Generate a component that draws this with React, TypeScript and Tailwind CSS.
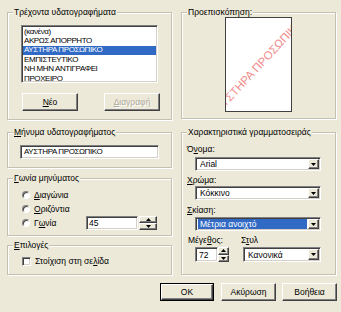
const sunken =
  "border border-t-[#808080] border-l-[#808080] border-r-white border-b-white shadow-[inset_1px_1px_0_#404040,inset_-1px_-1px_0_#d4d0c8]";
const raised =
  "border border-t-white border-l-white border-r-[#404040] border-b-[#404040] shadow-[inset_-1px_-1px_0_#808080]";

function Group({ title, className, children }: { title: React.ReactNode; className: string; children?: React.ReactNode }) {
  return (
    <div className={`relative border border-[#c4c1b1] shadow-[inset_1px_1px_0_#fff,1px_1px_0_#fff] ${className}`}>
      <span className="absolute left-[5px] top-[-6px] bg-[#ece9d8] px-[1px] leading-[10px]">{title}</span>
      {children}
    </div>
  );
}

function U({ children }: { children: React.ReactNode }) {
  return <span className="underline underline-offset-[1px]">{children}</span>;
}

function Button({ children, className = "", disabled = false, isDefault = false }: { children: React.ReactNode; className?: string; disabled?: boolean; isDefault?: boolean }) {
  const inner = (
    <div
      className={`flex h-full w-full items-center justify-center ${raised} ${
        disabled ? "text-[#aca899] [text-shadow:1px_1px_0_#fff]" : "text-black"
      }`}
    >
      {children}
    </div>
  );
  if (isDefault) {
    return <div className={`border border-black ${className}`}>{inner}</div>;
  }
  return <div className={className}>{inner}</div>;
}

function Arrow({ up = false }: { up?: boolean }) {
  return (
    <svg width="5" height="3" viewBox="0 0 5 3">
      <path d={up ? "M2.5 0 L5 3 L0 3 Z" : "M0 0 L5 0 L2.5 3 Z"} fill="#000" />
    </svg>
  );
}

function Spinner({ className }: { className: string }) {
  return (
    <div className={`flex flex-col ${className}`}>
      <div className={`flex flex-1 items-center justify-center bg-[#ece9d8] ${raised}`}>
        <Arrow up />
      </div>
      <div className={`flex flex-1 items-center justify-center bg-[#ece9d8] ${raised}`}>
        <Arrow />
      </div>
    </div>
  );
}

function Select({ value, className, selected = false }: { value: string; className: string; selected?: boolean }) {
  return (
    <div className={`flex items-center bg-white p-[1px] ${sunken} ${className}`}>
      <div className="flex h-full flex-1 items-center pl-[1px]">
        <span
          className={`flex h-full flex-1 items-center pl-[2px] ${
            selected ? "bg-[#316ac5] text-white" : ""
          }`}
        >
          {value}
        </span>
      </div>
      <div className={`ml-[1px] flex h-full w-[11px] items-center justify-center bg-[#ece9d8] ${raised}`}>
        <svg width="5" height="3" viewBox="0 0 5 3">
          <path d="M0 0 L5 0 L2.5 3 Z" fill="#000" />
        </svg>
      </div>
    </div>
  );
}

function Radio({ label }: { label: React.ReactNode }) {
  return (
    <div className="flex h-[14px] items-center gap-[4px]">
      <div className="h-[8px] w-[8px] rounded-full border border-t-[#808080] border-l-[#808080] border-r-white border-b-white bg-white shadow-[inset_1px_1px_0_#404040]" />
      <span>{label}</span>
    </div>
  );
}

const items = ["(κανένα)", "ΑΚΡΩΣ ΑΠΟΡΡΗΤΟ", "ΑΥΣΤΗΡΑ ΠΡΟΣΩΠΙΚΟ", "ΕΜΠΙΣΤΕΥΤΙΚΟ", "ΝΗ ΜΗΝ ΑΝΤΙΓΡΑΦΕΙ", "ΠΡΟΧΕΙΡΟ"];

export default function App() {
  return (
    <div className="h-[312px] w-[341px] bg-[#ece9d8] font-['Liberation_Sans',Arial,sans-serif] text-[8.5px] leading-[10px] text-black">
      <div className="flex gap-[9px] pl-[7px]">
        {/* left column */}
        <div className="flex w-[165px] flex-col pt-[12px]">
          <Group title="Τρέχοντα υδατογραφήματα" className="h-[108px] pl-[13px] pt-[12px]">
            <div className={`h-[58px] w-[137px] bg-white ${sunken} p-[1px]`}>
              {items.map((it, i) => (
                <div
                  key={it}
                  className={`flex h-[9.4px] items-center pl-[1px] text-[8px] tracking-[-0.4px] ${
                    i === 2 ? "bg-[#316ac5] text-white" : ""
                  }`}
                >
                  {it}
                </div>
              ))}
            </div>
            <div className="ml-[1px] mt-[10px] flex gap-[26px]">
              <Button className="h-[18px] w-[56px]">
                <U>Ν</U>έο
              </Button>
              <Button className="h-[18px] w-[56px]" disabled>
                <U>Δ</U>ιαγραφή
              </Button>
            </div>
          </Group>

          <Group
            title={
              <>
                <U>Μ</U>ήνυμα υδατογραφήματος
              </>
            }
            className="mt-[12px] h-[36px] pl-[12px] pt-[12px]"
          >
            <div className={`flex h-[14px] w-[139px] items-center bg-white pl-[3px] text-[8px] tracking-[-0.4px] ${sunken}`}>
              ΑΥΣΤΗΡΑ ΠΡΟΣΩΠΙΚΟ
            </div>
          </Group>

          <Group
            title={
              <>
                <U>Γ</U>ωνία μηνύματος
              </>
            }
            className="mt-[10px] h-[58px] pl-[14px] pt-[9px]"
          >
            <Radio
              label={
                <>
                  <U>Δ</U>ιαγώνια
                </>
              }
            />
            <Radio
              label={
                <>
                  <U>Ο</U>ριζόντια
                </>
              }
            />
            <div className="flex items-center">
              <div className="w-[64px]">
                <Radio
                  label={
                    <>
                      Γ<U>ω</U>νία
                    </>
                  }
                />
              </div>
              <div className={`flex h-[14px] w-[52px] items-center bg-white pl-[2px] ${sunken}`}>45</div>
              <Spinner className="ml-[1px] h-[14px] w-[18px]" />
            </div>
          </Group>

          <Group
            title={
              <>
                <U>Ε</U>πιλογές
              </>
            }
            className="mt-[9px] h-[30px] pl-[14px] pt-[10px]"
          >
            <div className="flex h-[10px] items-center gap-[4px]">
              <div className={`h-[9px] w-[9px] bg-white ${sunken}`} />
              <span>
                Στοίχιση στη σε<U>λ</U>ίδα
              </span>
            </div>
          </Group>
        </div>

        {/* right column */}
        <div className="flex w-[155px] flex-col pt-[12px]">
          <Group title="Προεπισκόπηση:" className="h-[107px] pt-[4px]">
            <div className="relative mx-auto h-[95px] w-[67px] overflow-hidden border border-[#404040] bg-white">
              <span className="absolute left-1/2 top-1/2 -translate-x-1/2 -translate-y-1/2 -rotate-[47deg] whitespace-nowrap text-[11.5px] leading-[12px] text-[#f08c8c]">
                ΑΥΣΤΗΡΑ ΠΡΟΣΩΠΙΚΟ
              </span>
            </div>
          </Group>

          <Group title="Χαρακτηριστικά γραμματοσειράς" className="mt-[13px] h-[143px] pl-[5px] pt-[11px]">
            <div className="h-[10px]">
              Ό<U>ν</U>ομα:
            </div>
            <Select value="Arial" className="ml-[8px] mt-[3px] h-[14px] w-[126px]" />
            <div className="mt-[4px] h-[10px]">
              <U>Χ</U>ρώμα:
            </div>
            <Select value="Κόκκινο" className="ml-[8px] mt-[1px] h-[14px] w-[126px]" />
            <div className="mt-[5px] h-[10px]">
              <U>Σ</U>κίαση:
            </div>
            <Select value="Μέτρια ανοιχτό" className="ml-[8px] mt-[2px] h-[14px] w-[126px]" selected />
            <div className="mt-[4px] flex h-[10px]">
              <span className="w-[54px] pl-[1px]">
                Μέγε<U>θ</U>ος:
              </span>
              <span>
                Σ<U>τ</U>υλ
              </span>
            </div>
            <div className="ml-[8px] mt-[2px] flex h-[15px]">
              <div className={`flex h-full w-[23px] items-center bg-white pl-[3px] ${sunken}`}>72</div>
              <Spinner className="h-full w-[11px]" />
              <Select value="Κανονικά" className="ml-[14px] h-full w-[78px]" />
            </div>
          </Group>
        </div>
      </div>

      <div className="mt-[8px] flex justify-end gap-[6px] pr-[4px]">
        <Button className="h-[18px] w-[54px] mr-[1px]" isDefault>
          OK
        </Button>
        <Button className="h-[18px] w-[55px]">Ακύρωση</Button>
        <Button className="h-[18px] w-[55px]">Βοήθεια</Button>
      </div>
    </div>
  );
}
